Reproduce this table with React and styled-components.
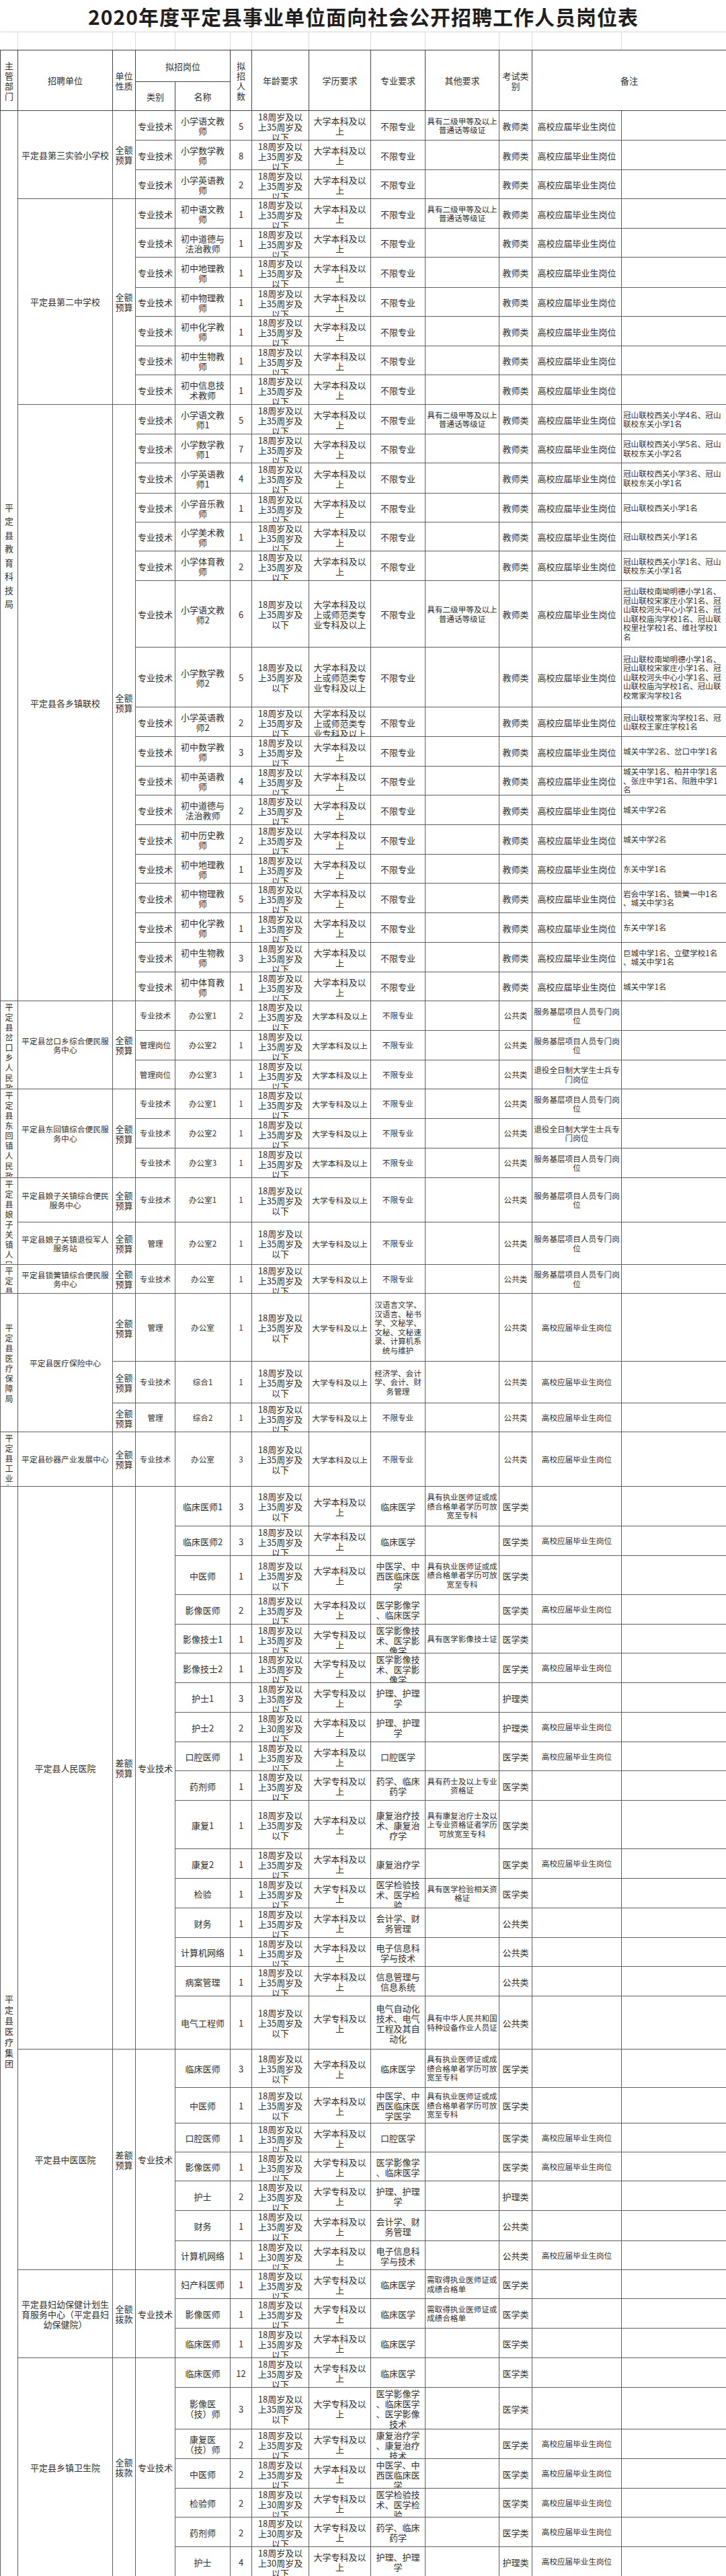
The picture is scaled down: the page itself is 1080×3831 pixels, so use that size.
import React from "react";
import styled, { createGlobalStyle } from "styled-components";

const GlobalStyle = createGlobalStyle`
  html, body {
    margin: 0;
    padding: 0;
    background: #fff;
  }
  body {
    font-family: "Noto Sans CJK SC", "Noto Sans", sans-serif;
    color: #333;
  }
`;

const COLS = [26, 141, 34, 59, 82, 32, 85, 92, 81, 110, 49, 133, 156];

const Page = styled.div`
  width: 1080px;
  height: 3831px;
  overflow: hidden;
  background: #fff;
`;

const Sheet = styled.table`
  width: 1080px;
  table-layout: fixed;
  border-collapse: collapse;
`;

const Col = styled.col`
  width: ${(p) => p.$w}px;
`;

const TitleCell = styled.td`
  height: 47px;
  padding: 0;
  text-align: center;
  vertical-align: middle;
  font-size: 30px;
  line-height: 36px;
  font-weight: 700;
  letter-spacing: 1px;
  color: #1e1e1e;
  border-bottom: 1px solid #d4d4d4;
`;

const GapCell = styled.td`
  height: 26px;
  padding: 0;
  border-right: 1px solid #dadada;
  border-bottom: 1px solid #444;
`;

const HeadRow = styled.tr`
  height: ${(p) => p.$h}px;
`;

const HeadCell = styled.th`
  padding: 0;
  border: 1px solid #444;
  font-weight: 400;
  font-size: 13px;
  line-height: 15px;
  white-space: pre;
  color: #303030;
  vertical-align: middle;
  text-align: center;
`;

const Cell = styled.td`
  padding: 0;
  border: 1px solid #5f5f5f;
  vertical-align: top;
`;

const Fit = styled.div`
  box-sizing: border-box;
  height: ${(p) => p.$h}px;
  overflow: hidden;
  display: flex;
  flex-direction: column;
  padding: 1px 2px 0;
  font-size: ${(p) => p.$fs}px;
  line-height: ${(p) => p.$lh}px;
  color: #2f2f2f;
`;

const Txt = styled.div`
  margin: ${(p) => (p.$left ? "auto auto auto 0" : "auto")};
  white-space: pre;
  text-align: ${(p) => (p.$left ? "left" : "center")};
`;

function Box({ h, fs = 13, lh, left, rowSpan, children }) {
  return (
    <Cell rowSpan={rowSpan}>
      <Fit $h={h - 1} $fs={fs} $lh={lh ?? (fs >= 13 ? 15 : 13.5)}>
        <Txt $left={left}>{children}</Txt>
      </Fit>
    </Cell>
  );
}

// common texts
const A35 = "18周岁及以\n上35周岁及\n以下";
const A30 = "18周岁及以\n上30周岁及\n以下";
const BK = "大学本科及以\n上";
const ZK = "大学专科及以\n上";
const BK1 = "大学本科及以上";
const ZK1 = "大学专科及以上";
const SF = "大学本科及以\n上或师范类专\n业专科及以上";
const GX = "高校应届毕业生岗位";
const PTH = "具有二级甲等及以上\n普通话等级证";
const ZY = "具有执业医师证或成\n绩合格单者学历可放\n宽至专科";
const FW = "服务基层项目人员专门岗\n位";
const TY = "退役全日制大学生士兵专\n门岗位";
const NL = "不限专业";
const QE = "全额\n预算";

const e = (h, name, n, other = "", n2 = "", edu = BK) => ({
  h, cat: "专业技术", name, n, age: A35, edu, major: NL, other, exam: "教师类", n1: GX, n2,
});

const g = (h, cat, name, n, edu, n1) => ({
  h, cat, name, n, age: A35, edu, major: NL, other: "", exam: "公共类", n1, n2: "",
});

const m = (h, name, n, edu, major, exam, other = "", n1 = "", age = A35) => ({
  h, name, n, age, edu, major, other, exam, n1, n2: "",
});

const SECTIONS = [
  {
    dept: "平定县教育科技局",
    lh: 20.5,
    dfs: 13,
    mode: "edu",
    units: [
      {
        name: "平定县第三实验小学校",
        nature: QE,
        rows: [
          e(44, "小学语文教\n师", 5, PTH),
          e(44, "小学数学教\n师", 8),
          e(43, "小学英语教\n师", 2),
        ],
      },
      {
        name: "平定县第二中学校",
        nature: QE,
        rows: [
          e(44, "初中语文教\n师", 1, PTH),
          e(43, "初中道德与\n法治教师", 1),
          e(45, "初中地理教\n师", 1),
          e(43, "初中物理教\n师", 1),
          e(44, "初中化学教\n师", 1),
          e(43, "初中生物教\n师", 1),
          e(44, "初中信息技\n术教师", 1),
        ],
      },
      {
        name: "平定县各乡镇联校",
        nature: QE,
        rows: [
          e(44, "小学语文教\n师1", 5, PTH, "冠山联校西关小学4名、冠山\n联校东关小学1名"),
          e(43, "小学数学教\n师1", 7, "", "冠山联校西关小学5名、冠山\n联校东关小学2名"),
          e(45, "小学英语教\n师1", 4, "", "冠山联校西关小学3名、冠山\n联校东关小学1名"),
          e(43, "小学音乐教\n师", 1, "", "冠山联校西关小学1名"),
          e(43, "小学美术教\n师", 1, "", "冠山联校西关小学1名"),
          e(44, "小学体育教\n师", 2, "", "冠山联校西关小学1名、冠山\n联校东关小学1名"),
          e(
            99,
            "小学语文教\n师2",
            6,
            PTH,
            "冠山联校南坳明德小学1名、\n冠山联校宋家庄小学1名、冠\n山联校河头中心小学1名、冠\n山联校庙沟学校1名、冠山联\n校里社学校1名、维社学校1\n名",
            SF
          ),
          e(
            89,
            "小学数学教\n师2",
            5,
            "",
            "冠山联校南坳明德小学1名、\n冠山联校宋家庄小学1名、冠\n山联校河头中心小学1名、冠\n山联校庙沟学校1名、冠山联\n校常家沟学校1名",
            SF
          ),
          e(44, "小学英语教\n师2", 2, "", "冠山联校常家沟学校1名、冠\n山联校王家庄学校1名", SF),
          e(44, "初中数学教\n师", 3, "", "城关中学2名、岔口中学1名"),
          e(43, "初中英语教\n师", 4, "", "城关中学1名、柏井中学1名\n、张庄中学1名、阳胜中学1\n名"),
          e(44, "初中道德与\n法治教师", 2, "", "城关中学2名"),
          e(44, "初中历史教\n师", 2, "", "城关中学2名"),
          e(43, "初中地理教\n师", 1, "", "东关中学1名"),
          e(44, "初中物理教\n师", 5, "", "岩会中学1名、锁簧一中1名\n、城关中学3名"),
          e(44, "初中化学教\n师", 1, "", "东关中学1名"),
          e(44, "初中生物教\n师", 3, "", "巨城中学1名、立壁学校1名\n、城关中学1名"),
          e(43, "初中体育教\n师", 1, "", "城关中学1名"),
        ],
      },
    ],
  },
  {
    dept: "平定县岔口乡人民政府",
    lh: 15,
    dfs: 12,
    mode: "gov",
    units: [
      {
        name: "平定县岔口乡综合便民服\n务中心",
        nature: QE,
        rows: [
          g(44, "专业技术", "办公室1", 2, BK1, FW),
          g(44, "管理岗位", "办公室2", 1, BK1, FW),
          g(43, "管理岗位", "办公室3", 1, BK1, TY),
        ],
      },
    ],
  },
  {
    dept: "平定县东回镇人民政府",
    lh: 15,
    dfs: 12,
    mode: "gov",
    units: [
      {
        name: "平定县东回镇综合便民服\n务中心",
        nature: QE,
        rows: [
          g(44, "专业技术", "办公室1", 1, ZK1, FW),
          g(44, "专业技术", "办公室2", 1, ZK1, TY),
          g(44, "专业技术", "办公室3", 1, BK1, FW),
        ],
      },
    ],
  },
  {
    dept: "平定县娘子关镇人民政府",
    lh: 15,
    dfs: 12,
    mode: "gov",
    units: [
      {
        name: "平定县娘子关镇综合便民\n服务中心",
        nature: QE,
        rows: [g(66, "专业技术", "办公室1", 1, ZK1, FW)],
      },
      {
        name: "平定县娘子关镇退役军人\n服务站",
        nature: QE,
        rows: [g(63, "管理", "办公室2", 1, ZK1, FW)],
      },
    ],
  },
  {
    dept: "平定县锁簧镇人民政府",
    lh: 15,
    dfs: 12,
    mode: "gov",
    units: [
      {
        name: "平定县锁簧镇综合便民服\n务中心",
        nature: QE,
        rows: [g(43, "专业技术", "办公室", 1, ZK1, FW)],
      },
    ],
  },
  {
    dept: "平定县医疗保障局",
    lh: 15,
    dfs: 12,
    mode: "gov",
    units: [
      {
        name: "平定县医疗保险中心",
        rows: [
          {
            ...g(101, "管理", "办公室", 1, ZK1, GX),
            nature: QE,
            major: "汉语言文学、\n汉语言、秘书\n学、文秘学、\n文秘、文秘速\n录、计算机系\n统与维护",
          },
          {
            ...g(62, "专业技术", "综合1", 1, ZK1, GX),
            nature: QE,
            major: "经济学、会计\n学、会计、财\n务管理",
          },
          { ...g(43, "管理", "综合2", 1, ZK1, GX), nature: QE },
        ],
      },
    ],
  },
  {
    dept: "平定县工业和信息化局",
    lh: 15,
    dfs: 12,
    mode: "gov",
    units: [
      {
        name: "平定县砂器产业发展中心",
        nature: QE,
        rows: [g(81, "专业技术", "办公室", 3, BK1, GX)],
      },
    ],
  },
  {
    dept: "平定县医疗集团",
    lh: 16,
    dfs: 13,
    mode: "med",
    units: [
      {
        name: "平定县人民医院",
        nature: "差额\n预算",
        cat: "专业技术",
        rows: [
          m(59, "临床医师1", 3, BK, "临床医学", "医学类", ZY),
          m(44, "临床医师2", 3, BK, "临床医学", "医学类", "", GX),
          m(58, "中医师", 1, BK, "中医学、中\n西医临床医\n学", "医学类", ZY),
          m(44, "影像医师", 2, BK, "医学影像学\n、临床医学", "医学类", "", GX),
          m(43, "影像技士1", 1, ZK, "医学影像技\n术、医学影\n像学", "医学类", "具有医学影像技士证"),
          m(44, "影像技士2", 1, ZK, "医学影像技\n术、医学影\n像学", "医学类", "", GX),
          m(44, "护士1", 3, ZK, "护理、护理\n学", "护理类"),
          m(44, "护士2", 2, BK, "护理、护理\n学", "护理类", "", GX, A30),
          m(43, "口腔医师", 1, BK, "口腔医学", "医学类", "", GX),
          m(44, "药剂师", 1, ZK, "药学、临床\n药学", "医学类", "具有药士及以上专业\n资格证"),
          m(
            72,
            "康复1",
            1,
            BK,
            "康复治疗技\n术、康复治\n疗学",
            "医学类",
            "具有康复治疗士及以\n上专业资格证者学历\n可放宽至专科"
          ),
          m(44, "康复2", 1, BK, "康复治疗学", "医学类", "", GX),
          m(44, "检验", 1, ZK, "医学检验技\n术、医学检\n验", "医学类", "具有医学检验相关资\n格证"),
          m(44, "财务", 1, BK, "会计学、财\n务管理", "公共类"),
          m(43, "计算机网络", 1, BK, "电子信息科\n学与技术", "公共类"),
          m(44, "病案管理", 1, BK, "信息管理与\n信息系统", "公共类"),
          m(
            79,
            "电气工程师",
            1,
            ZK,
            "电气自动化\n技术、电气\n工程及其自\n动化",
            "公共类",
            "具有中华人民共和国\n特种设备作业人员证"
          ),
        ],
      },
      {
        name: "平定县中医医院",
        nature: "差额\n预算",
        cat: "专业技术",
        otherLeft: true,
        rows: [
          m(57, "临床医师", 3, BK, "临床医学", "医学类", ZY),
          m(53, "中医师", 1, BK, "中医学、中\n西医临床医\n学医学", "医学类", ZY),
          m(43, "口腔医师", 1, BK, "口腔医学", "医学类", "", GX),
          m(43, "影像医师", 1, ZK, "医学影像学\n、临床医学", "医学类", "", GX),
          m(44, "护士", 2, ZK, "护理、护理\n学", "护理类"),
          m(45, "财务", 1, BK, "会计学、财\n务管理", "公共类"),
          m(43, "计算机网络", 1, BK, "电子信息科\n学与技术", "公共类", "", GX, A30),
        ],
      },
      {
        name: "平定县妇幼保健计划生\n育服务中心（平定县妇\n幼保健院）",
        nature: "全额\n拨款",
        cat: "专业技术",
        otherLeft: true,
        rows: [
          m(43, "妇产科医师", 1, ZK, "临床医学", "医学类", "需取得执业医师证或\n成绩合格单"),
          m(44, "影像医师", 1, ZK, "临床医学", "医学类", "需取得执业医师证或\n成绩合格单"),
          m(44, "临床医师", 1, BK, "临床医学", "医学类"),
        ],
      },
      {
        name: "平定县乡镇卫生院",
        nature: "全额\n拨款",
        cat: "专业技术",
        rows: [
          m(44, "临床医师", 12, ZK, "临床医学", "医学类"),
          m(62, "影像医\n（技）师", 3, ZK, "医学影像学\n、临床医学\n、医学影像\n技术", "医学类"),
          m(44, "康复医\n（技）师", 2, ZK, "康复治疗学\n、康复治疗\n技术", "医学类", "", GX),
          m(44, "中医师", 2, BK, "中医学、中\n西医临床医\n学", "医学类", "", GX),
          m(43, "检验师", 2, ZK, "医学检验技\n术、医学检\n验", "医学类", "", GX, A30),
          m(44, "药剂师", 2, ZK, "药学、临床\n药学", "医学类", "", GX, A30),
          m(44, "护士", 4, ZK, "护理、护理\n学", "护理类", "", GX, A30),
        ],
      },
    ],
  },
];

const L = 13;
const S = 11.6;

function sizesFor(mode) {
  const main = mode === "gov" ? S : L;
  return {
    unit: mode === "gov" ? 11.8 : L,
    main,
    edu: mode === "gov" ? 11.8 : L,
    n1: mode === "edu" ? L : S,
  };
}

function sectionRows(sec, si) {
  const fs = sizesFor(sec.mode);
  const all = sec.units.flatMap((u) => u.rows);
  const secH = all.reduce((a, r) => a + r.h, 0);
  const out = [];

  sec.units.forEach((u, ui) => {
    const uH = u.rows.reduce((a, r) => a + r.h, 0);
    const span = u.rows.length;

    u.rows.forEach((r, ri) => {
      const first = ri === 0;
      out.push(
        <tr key={`${si}-${ui}-${ri}`}>
          {ui === 0 && first && (
            <Box rowSpan={all.length} h={secH - 1} fs={sec.dfs} lh={sec.lh}>
              {[...sec.dept].join("\n")}
            </Box>
          )}
          {first && (
            <Box rowSpan={span} h={uH - 1} fs={fs.unit}>
              {u.name}
            </Box>
          )}
          {u.nature ? (
            first && (
              <Box rowSpan={span} h={uH - 1}>
                {u.nature}
              </Box>
            )
          ) : (
            <Box h={r.h}>{r.nature}</Box>
          )}
          {u.cat ? (
            first && (
              <Box rowSpan={span} h={uH - 1} fs={fs.main}>
                {u.cat}
              </Box>
            )
          ) : (
            <Box h={r.h} fs={fs.main}>
              {r.cat}
            </Box>
          )}
          <Box h={r.h} fs={fs.main}>
            {r.name}
          </Box>
          <Box h={r.h} fs={fs.main}>
            {String(r.n)}
          </Box>
          <Box h={r.h}>{r.age}</Box>
          <Box h={r.h} fs={fs.edu}>
            {r.edu}
          </Box>
          <Box h={r.h} fs={fs.main}>
            {r.major}
          </Box>
          <Box h={r.h} fs={S} left={u.otherLeft}>
            {r.other}
          </Box>
          <Box h={r.h} fs={fs.main}>
            {r.exam}
          </Box>
          <Box h={r.h} fs={fs.n1}>
            {r.n1}
          </Box>
          <Box h={r.h} fs={S} left>
            {r.n2}
          </Box>
        </tr>
      );
    });
  });
  return out;
}

export default function App() {
  return (
    <Page>
      <GlobalStyle />
      <Sheet>
        <colgroup>
          {COLS.map((w, i) => (
            <Col key={i} $w={w} />
          ))}
        </colgroup>
        <thead>
          <tr>
            <TitleCell colSpan={13}>2020年度平定县事业单位面向社会公开招聘工作人员岗位表</TitleCell>
          </tr>
          <tr>
            {COLS.map((w, i) => (
              <GapCell key={i} />
            ))}
          </tr>
          <HeadRow $h={47}>
            <HeadCell rowSpan={2}>{"主\n管\n部\n门"}</HeadCell>
            <HeadCell rowSpan={2}>招聘单位</HeadCell>
            <HeadCell rowSpan={2}>{"单位\n性质"}</HeadCell>
            <HeadCell colSpan={2}>拟招岗位</HeadCell>
            <HeadCell rowSpan={2}>{"拟\n招\n人\n数"}</HeadCell>
            <HeadCell rowSpan={2}>年龄要求</HeadCell>
            <HeadCell rowSpan={2}>学历要求</HeadCell>
            <HeadCell rowSpan={2}>专业要求</HeadCell>
            <HeadCell rowSpan={2}>其他要求</HeadCell>
            <HeadCell rowSpan={2}>{"考试类\n别"}</HeadCell>
            <HeadCell rowSpan={2} colSpan={2}>
              备注
            </HeadCell>
          </HeadRow>
          <HeadRow $h={43}>
            <HeadCell>类别</HeadCell>
            <HeadCell>名称</HeadCell>
          </HeadRow>
        </thead>
        <tbody>{SECTIONS.map((sec, si) => sectionRows(sec, si))}</tbody>
      </Sheet>
    </Page>
  );
}
